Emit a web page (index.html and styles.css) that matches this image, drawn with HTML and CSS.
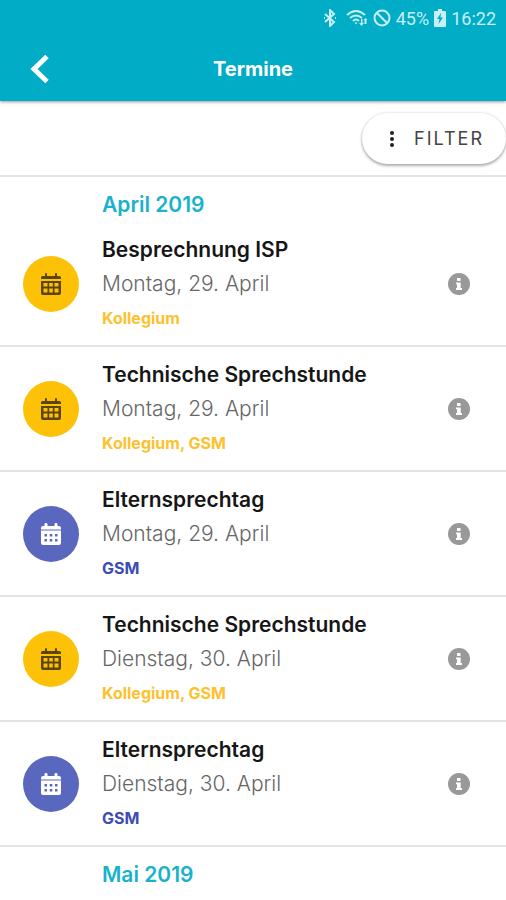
FILE: index.html
```html
<!DOCTYPE html>
<html lang="de">
<head>
<meta charset="utf-8">
<meta name="viewport" content="width=device-width, initial-scale=1">
<title>Termine</title>
<link rel="stylesheet" href="styles.css">
</head>
<body>
<svg class="sprite" aria-hidden="true">
  <symbol id="calendar-grid" viewBox="0 0 20 22">
    <path fill-rule="evenodd" d="M0 6V4.500Q0 3 1.500 3H4V1Q4 0 5 0Q6 0 6 1V3H14V1Q14 0 15 0Q16 0 16 1V3H18.500Q20 3 20 4.500V6ZM0 8H20V20Q20 22 18 22H2Q0 22 0 20ZM2.500 10V13.500H6.500V10ZM8.200 10V13.500H11.800V10ZM13.500 10V13.500H17.500V10ZM2.500 15.500V19.500H6.500V15.500ZM8.200 15.500V19.500H11.800V15.500ZM13.500 15.500V19.500H17.500V15.500Z"/>
  </symbol>
  <symbol id="calendar-days" viewBox="0 0 20 22">
    <path fill-rule="evenodd" d="M0 6.500V5Q0 3 2 3H3.500V1Q3.500 0 5 0Q6.500 0 6.500 1V3H13.500V1Q13.500 0 15 0Q16.500 0 16.500 1V3H18Q20 3 20 5V6.500ZM0 7.500H20V20Q20 22 18 22H2Q0 22 0 20ZM3.500 11V13.500H6V11ZM8.700 11V13.500H11.300V11ZM14 11V13.500H16.500V11ZM3.500 16V18.500H6V16ZM8.700 16V18.500H11.300V16ZM14 16V18.500H16.500V16Z"/>
  </symbol>
  <symbol id="info" viewBox="0 0 22 22">
    <path fill-rule="evenodd" d="M11 0A11 11 0 1 1 11 22A11 11 0 1 1 11 0ZM9 5V8H12.500V5ZM8 9.500V11.200H9V15H8V17H14V15H12.700V9.500Z"/>
  </symbol>
</svg>

<header class="app-header">
  <div class="status">
    <svg class="status-bt" viewBox="0 0 14 18" aria-hidden="true"><path d="M2 5L11 13L7 17V1L11 5L2 13M1 9H2M12 9H13"/></svg>
    <svg class="status-wifi" viewBox="0 0 22 18" aria-hidden="true"><path d="M1 6Q10 -2 19 6M4 9Q10 4 16 9M7 12Q10 9 13 12"/><path class="solid" d="M8.500 13.500L10 15.500L11.500 13.500ZM15 10V14H13L15.500 17L18 14H16.500V10ZM18.500 15V11H17.500L19.500 9L21.500 11H20.500V15Z"/></svg>
    <svg class="status-none" viewBox="0 0 18 18" aria-hidden="true"><circle cx="9" cy="9" r="7.500"/><path d="M3.700 3.700L14.300 14.300"/></svg>
    <span>45%</span>
    <svg class="status-batt" viewBox="0 0 12 18" aria-hidden="true"><path fill-rule="evenodd" d="M4 0H8V2H11Q12 2 12 3V17Q12 18 11 18H1Q0 18 0 17V3Q0 2 1 2H4ZM7 4L3 10H5.500L4.500 15L9 8.500H6.500Z"/></svg>
    <span>16:22</span>
  </div>
  <div class="title-bar">
    <button class="back" type="button" aria-label="Zurück"><svg viewBox="0 0 20 30" aria-hidden="true"><path d="M17 2.500L4 15L17 27.500"/></svg></button>
    <h1>Termine</h1>
  </div>
</header>

<div class="toolbar">
  <button class="filter" type="button">
    <svg viewBox="0 0 4 16" aria-hidden="true"><circle cx="2" cy="2" r="2"/><circle cx="2" cy="8" r="2"/><circle cx="2" cy="14" r="2"/></svg>
    <span>FILTER</span>
  </button>
</div>

<main>
  <h2>April 2019</h2>
  <ul class="events">
    <li class="event staff">
      <span class="badge"><svg aria-hidden="true"><use href="#calendar-grid"/></svg></span>
      <div class="details"><h3>Besprechnung ISP</h3><p class="date">Montag, 29. April</p><p class="tags">Kollegium</p></div>
      <button class="info" type="button" aria-label="Details"><svg aria-hidden="true"><use href="#info"/></svg></button>
    </li>
    <li class="event staff">
      <span class="badge"><svg aria-hidden="true"><use href="#calendar-grid"/></svg></span>
      <div class="details"><h3>Technische Sprechstunde</h3><p class="date">Montag, 29. April</p><p class="tags">Kollegium, GSM</p></div>
      <button class="info" type="button" aria-label="Details"><svg aria-hidden="true"><use href="#info"/></svg></button>
    </li>
    <li class="event school">
      <span class="badge"><svg aria-hidden="true"><use href="#calendar-days"/></svg></span>
      <div class="details"><h3>Elternsprechtag</h3><p class="date">Montag, 29. April</p><p class="tags">GSM</p></div>
      <button class="info" type="button" aria-label="Details"><svg aria-hidden="true"><use href="#info"/></svg></button>
    </li>
    <li class="event staff">
      <span class="badge"><svg aria-hidden="true"><use href="#calendar-grid"/></svg></span>
      <div class="details"><h3>Technische Sprechstunde</h3><p class="date">Dienstag, 30. April</p><p class="tags">Kollegium, GSM</p></div>
      <button class="info" type="button" aria-label="Details"><svg aria-hidden="true"><use href="#info"/></svg></button>
    </li>
    <li class="event school">
      <span class="badge"><svg aria-hidden="true"><use href="#calendar-days"/></svg></span>
      <div class="details"><h3>Elternsprechtag</h3><p class="date">Dienstag, 30. April</p><p class="tags">GSM</p></div>
      <button class="info" type="button" aria-label="Details"><svg aria-hidden="true"><use href="#info"/></svg></button>
    </li>
  </ul>
  <h2>Mai 2019</h2>
</main>
</body>
</html>
```
FILE: styles.css
```css
* { box-sizing: border-box; }
body { margin: 0; background: #fff; color: #161616; font-family: Inter, "Liberation Sans", sans-serif; }
h1, h2, h3, p, ul { margin: 0; padding: 0; }
button { border: 0; padding: 0; background: none; font: inherit; color: inherit; cursor: pointer; }
svg { display: block; flex: none; }
.sprite { display: none; }

.app-header { background: #00acc6; color: #fff; box-shadow: 0 1px 3px rgba(0, 0, 0, .4); }
.status { display: flex; align-items: center; justify-content: flex-end; gap: 5px; height: 36px; padding-right: 10px; color: #c8f0f6; font-family: Roboto, sans-serif; font-size: 18px; }
.status svg { height: 18px; fill: none; stroke: currentColor; stroke-width: 2; }
.status-bt { width: 14px; }
.status .status-wifi { width: 22px; margin-left: 4px; }
.status-none { width: 18px; }
.status .status-batt { width: 12px; fill: currentColor; stroke: none; }
.status .solid { fill: currentColor; stroke: none; }
.title-bar { display: grid; grid-template-columns: 80px 1fr 80px; align-items: center; height: 65px; }
.back { display: grid; place-items: center; height: 48px; }
.back svg { width: 20px; height: 30px; fill: none; stroke: #fff; stroke-width: 5; }
h1 { font-size: 20px; line-height: 34px; font-weight: 700; text-align: center; }

.toolbar { display: flex; justify-content: flex-end; padding: 12px 0 11px; border-bottom: 2px solid #e4e4e4; }
.filter { display: flex; align-items: center; gap: 20px; height: 51px; padding: 0 22px 0 28px; border-radius: 26px; background: #fff; color: #444; font-size: 18px; letter-spacing: 2px; box-shadow: 0 2px 3px rgba(0, 0, 0, .3), 0 0 3px rgba(0, 0, 0, .15); }
.filter svg { width: 4px; height: 16px; fill: #222; }

h2 { padding: 11px 16px 0 102px; color: #19b2cb; font-size: 21px; line-height: 34px; font-weight: 600; }
.events { list-style: none; }
.event { display: grid; grid-template-columns: 56px 1fr 48px; column-gap: 23px; align-items: center; padding: 11px 23px 10px; border-bottom: 2px solid #e4e4e4; }
.badge { display: grid; place-items: center; width: 56px; height: 56px; border-radius: 50%; }
.badge svg { width: 20px; height: 22px; fill: currentColor; }
.staff .badge { background: #fdc108; color: #5c4605; }
.school .badge { background: #5968be; color: #fff; }
h3 { font-size: 21px; line-height: 34px; font-weight: 600; }
.date { color: #666; font-size: 21px; line-height: 34px; font-weight: 300; }
.tags { font-size: 16px; line-height: 34px; font-weight: 700; }
.staff .tags { color: #fdc12e; }
.school .tags { color: #3c4eb2; }
.info { display: grid; place-items: center; height: 48px; color: #999; }
.info svg { width: 22px; height: 22px; fill: currentColor; }
```
